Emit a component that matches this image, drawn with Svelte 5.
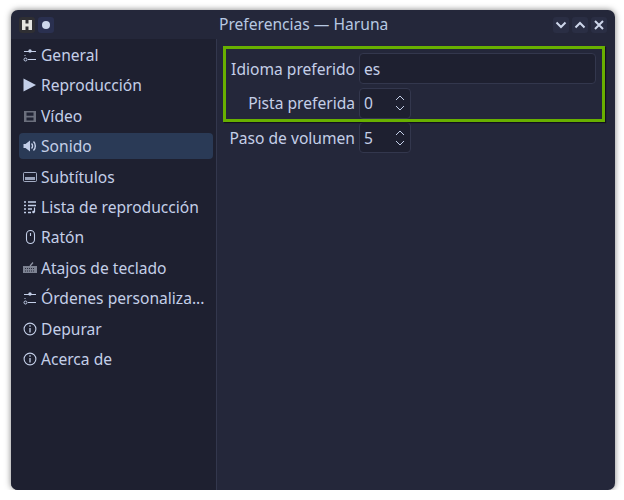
<script>
  const items = [
    { label: "General", icon: "sliders" },
    { label: "Reproducción", icon: "play" },
    { label: "Vídeo", icon: "film" },
    { label: "Sonido", icon: "sound", active: true },
    { label: "Subtítulos", icon: "subs" },
    { label: "Lista de reproducción", icon: "list" },
    { label: "Ratón", icon: "mouse" },
    { label: "Atajos de teclado", icon: "keyboard" },
    { label: "Órdenes personaliza...", icon: "sliders" },
    { label: "Depurar", icon: "info" },
    { label: "Acerca de", icon: "info" }
  ];
</script>

<div class="window">
  <header class="titlebar">
    <div class="title-left">
      <span class="app-icon">
        <svg width="12" height="12" viewBox="0 0 12 12"><path d="M1 1h3.500v3.500h3V1H11v10H7.500V7.500h-3V11H1z" fill="#e4e4e0" /></svg>
      </span>
      <span class="pin"><i></i></span>
    </div>
    <div class="title">Preferencias — Haruna</div>
    <div class="title-right">
      <span class="wbtn">
        <svg width="12" height="12" viewBox="0 0 12 12"><path d="M1.500 3.500 6 8l4.500-4.500" fill="none" stroke="#cdd6ea" stroke-width="2" /></svg>
      </span>
      <span class="wbtn">
        <svg width="12" height="12" viewBox="0 0 12 12"><path d="M1.500 8.500 6 4l4.500 4.500" fill="none" stroke="#cdd6ea" stroke-width="2" /></svg>
      </span>
      <span class="wbtn">
        <svg width="12" height="12" viewBox="0 0 12 12"><path d="M2 2l8 8M10 2l-8 8" fill="none" stroke="#cdd6ea" stroke-width="2" /></svg>
      </span>
    </div>
  </header>

  <div class="body">
    <nav class="sidebar">
      {#each items as item}
        <div class="item" class:active={item.active}>
          <svg class="icon" width="16" height="16" viewBox="0 0 16 16" fill="none" stroke="#c4cfe8">
            {#if item.icon === "sliders"}
              <path d="M2 4.500h12M6 12.500h8" />
              <circle cx="8" cy="4" r="1.700" fill="#c4cfe8" stroke="none" />
              <circle cx="3.500" cy="12.500" r="1.500" />
              <path d="M2 8.500h2" opacity=".5" />
            {:else if item.icon === "play"}
              <path d="M1.500 1.500v13L14 8z" fill="#c4cfe8" stroke="none" />
            {:else if item.icon === "film"}
              <path d="M2 3h12v11H2z" fill="#6b6f7d" stroke="none" />
              <path d="M4.500 4.500h7v3.300h-7zM4.500 9.500h7v3h-7z" fill="#1f2233" stroke="none" />
            {:else if item.icon === "sound"}
              <path d="M1.500 6H3.500L8 2.500v11L3.500 10h-2z" fill="#c4cfe8" stroke="none" />
              <path d="M9.500 5.500a3.500 3.500 0 0 1 0 5M11.500 3.500a6.500 6.500 0 0 1 0 9" stroke-width="1.400" />
            {:else if item.icon === "subs"}
              <rect x="1.500" y="3.500" width="13" height="9" rx="1" opacity=".8" />
              <path d="M3 8h10v3H3z" fill="#c4cfe8" stroke="none" opacity=".75" />
            {:else if item.icon === "list"}
              <path d="M2 3h2M6 3h8M2 6.500h2M6 6.500h8M2 10h2M6 10h4M2 13.500h2M6 13.500h3" stroke-width="1.400" />
              <path d="M12.500 8.500V13" stroke-width="1.200" />
              <circle cx="11.500" cy="13" r="1.300" fill="#c4cfe8" stroke="none" />
            {:else if item.icon === "mouse"}
              <rect x="4.500" y="1.500" width="8" height="13" rx="4" stroke-width="1.100" />
              <path d="M8.500 4v3" stroke-width="1.100" />
            {:else if item.icon === "keyboard"}
              <path d="M1 6h14v7H1z" fill="#7d8292" stroke="none" />
              <path d="M8 6l3-3.500" stroke="#9095a5" stroke-width="1.200" />
              <path d="M3 8.500h10M3 11h10" stroke="#2a2d3d" stroke-dasharray="1 1" />
            {:else if item.icon === "info"}
              <circle cx="8" cy="8" r="5.900" stroke-width="1.100" />
              <path d="M8 7v4.500M8 4.300v1.500" stroke-width="1.300" />
            {/if}
          </svg>
          <span class="label">{item.label}</span>
        </div>
      {/each}
    </nav>

    <main class="content">
      <div class="row">
        <label for="lang">Idioma preferido</label>
        <input id="lang" class="field wide" value="es" />
      </div>
      <div class="row">
        <label for="track">Pista preferida</label>
        <div id="track" class="field spin">
          <span>0</span>
          <svg width="12" height="20" viewBox="0 0 12 20" fill="none" stroke="#c4cfe8"><path d="M2 7l4-4 4 4M2 13l4 4 4-4" /></svg>
        </div>
      </div>
      <div class="row">
        <label for="vol">Paso de volumen</label>
        <div id="vol" class="field spin">
          <span>5</span>
          <svg width="12" height="20" viewBox="0 0 12 20" fill="none" stroke="#c4cfe8"><path d="M2 7l4-4 4 4M2 13l4 4 4-4" /></svg>
        </div>
      </div>
      <div class="highlight"></div>
    </main>
  </div>
</div>

<style>
  :global(body) {
    background: #ffffff;
    font-family: "Noto Sans", sans-serif;
  }

  .window {
    box-sizing: border-box;
    width: 604px;
    height: 480px;
    margin: 10px 0 0 11px;
    background: #24273a;
    border-radius: 7px;
    color: #c4cfe8;
    font-size: 15.600px;
    overflow: hidden;
    display: flex;
    flex-direction: column;
    box-shadow: 0 0 6px rgba(0, 0, 0, 0.5);
  }

  .titlebar {
    height: 29px;
    flex: none;
    display: flex;
    align-items: center;
    padding: 0 8px;
    position: relative;
  }

  .title-left {
    display: flex;
    gap: 3px;
    width: 200px;
  }

  .app-icon,
  .pin,
  .wbtn {
    width: 16px;
    height: 16px;
    display: flex;
    align-items: center;
    justify-content: center;
    border-radius: 3px;
  }

  .app-icon {
    background: #2f2f33;
  }

  .pin {
    background: #2a3050;
  }

  .pin i {
    width: 8px;
    height: 8px;
    border-radius: 50%;
    background: #cdd6ea;
  }

  .title {
    flex: 1;
    line-height: 29px;
    color: #b7c9e2;
  }

  .title-right {
    display: flex;
    gap: 3px;
  }

  .wbtn {
    background: #2a2e44;
  }

  .body {
    flex: 1;
    display: flex;
    min-height: 0;
  }

  .sidebar {
    box-sizing: border-box;
    width: 206px;
    flex: none;
    background: #1e2030;
    border-right: 1px solid #33374d;
    padding: 3px 3px 0 8px;
    display: flex;
    flex-direction: column;
    gap: 4.400px;
  }

  .item {
    height: 26px;
    display: flex;
    align-items: center;
    border-radius: 4px;
    padding-left: 3px;
    gap: 3px;
    flex: none;
  }

  .item.active {
    background: #2a3a56;
  }

  .icon {
    flex: none;
  }

  .label {
    white-space: nowrap;
  }

  .content {
    flex: 1;
    position: relative;
    padding: 14px 19px 0 0;
    display: flex;
    flex-direction: column;
    gap: 3.500px;
  }

  .row {
    display: flex;
    align-items: center;
    gap: 4px;
  }

  label {
    width: 138px;
    flex: none;
    text-align: right;
    white-space: nowrap;
  }

  .field {
    box-sizing: border-box;
    height: 31px;
    background: #1e2030;
    border: 1px solid #33374d;
    border-radius: 4px;
    color: #c4cfe8;
    font: inherit;
    padding: 0 4px;
  }

  .wide {
    flex: 1;
    min-width: 0;
    width: 237px;
    max-width: 237px;
    outline: none;
  }

  .spin {
    width: 52px;
    display: flex;
    align-items: center;
    justify-content: space-between;
  }

  .highlight {
    position: absolute;
    left: 6px;
    top: 7px;
    width: 382px;
    height: 76px;
    box-sizing: border-box;
    border: 3px solid #68b000;
    box-shadow: 1px 1px 1px rgba(0, 0, 0, 0.5);
    pointer-events: none;
  }
</style>
